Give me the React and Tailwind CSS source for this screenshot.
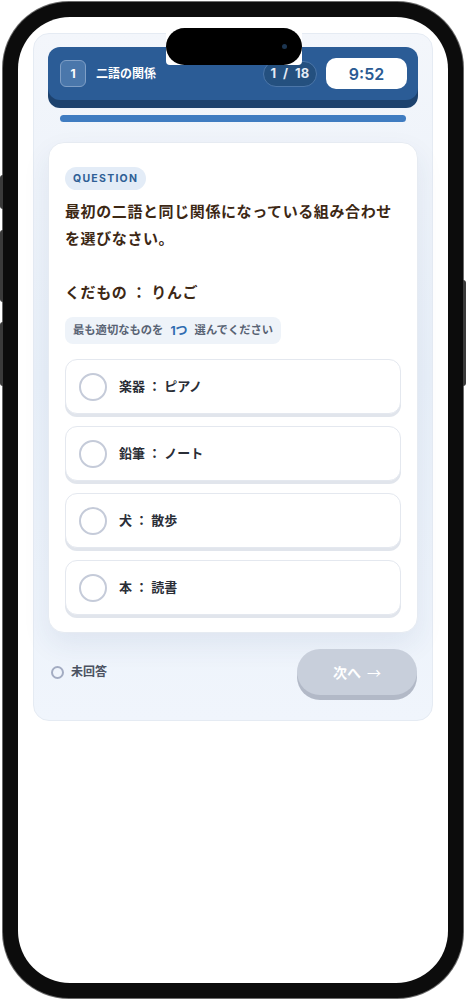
import React from "react";

const options = [
    { id: 1, label: "楽器 ： ピアノ" },
    { id: 2, label: "鉛筆 ： ノート" },
    { id: 3, label: "犬 ： 散歩" },
    { id: 4, label: "本 ： 読書" },
];

const font = { fontFamily: '"Inter", "Noto Sans CJK JP", sans-serif' };

const OptionCard = ({ label }) => (
    <button
        type="button"
        className="flex h-[55px] w-full items-center gap-3 rounded-xl border border-[#e4e8ef] bg-white pl-[13px] text-left shadow-[0_3px_0_#e1e5ec]"
    >
        <span className="h-[28px] w-[28px] shrink-0 rounded-full border-2 border-[#c5cbd9]" />
        <span className="text-[13px] font-bold text-[#2a2e37]">{label}</span>
    </button>
);

const App = () => {
    return (
        <div className="h-[1000px] w-[466px] bg-white pl-[3px] pt-[2px]" style={font}>
            <div className="relative h-[996px] w-[460px] rounded-[66px] bg-[#0c0c0c] p-[15px] ring-1 ring-[#6b6b6b]">
                {/* side buttons */}
                <div className="absolute -left-[3px] top-[173px] h-[34px] w-[3px] rounded-l bg-[#3a3a3a]" />
                <div className="absolute -left-[3px] top-[228px] h-[72px] w-[3px] rounded-l bg-[#3a3a3a]" />
                <div className="absolute -left-[3px] top-[320px] h-[64px] w-[3px] rounded-l bg-[#3a3a3a]" />
                <div className="absolute -right-[3px] top-[278px] h-[106px] w-[3px] rounded-r bg-[#3a3a3a]" />

                <div className="relative h-full overflow-hidden rounded-[52px] bg-white px-[15px] pt-[16px]">
                    {/* dynamic island */}
                    <div className="absolute left-[148px] top-[11px] z-10 flex h-[37px] w-[136px] items-center justify-end rounded-b-sm bg-white">
                        <div className="flex h-full w-full items-center justify-end rounded-full bg-black pr-[15px]">
                            <span className="h-[5px] w-[5px] rounded-full bg-[#1c3550]" />
                        </div>
                    </div>

                    <div className="rounded-2xl border border-[#e5ebf3] bg-gradient-to-b from-[#f3f6fb] via-[#e9f0f9] to-[#f0f5fc] px-[14px] pb-[25px] pt-[13px]">
                        {/* header */}
                        <div className="flex h-[53px] items-center rounded-xl bg-[#2b5c96] pl-[12px] pr-[11px] shadow-[0_8px_0_#1d426e]">
                            <div className="flex h-[27px] w-[26px] items-center justify-center rounded-md border border-[#7f9fc6] bg-[#4a77ab] text-[12px] font-bold text-white">
                                1
                            </div>
                            <span className="ml-[10px] text-[12px] font-bold text-white">二語の関係</span>
                            <div className="ml-auto flex h-[26px] w-[54px] items-center justify-center whitespace-pre rounded-full border border-[#4c76a8] bg-[#24507f] text-[13px] font-bold tracking-[0.02em] text-[#e3eaf4]">
                                {"1  /  18"}
                            </div>
                            <div className="ml-[9px] flex h-[31px] w-[81px] items-center justify-center rounded-[10px] bg-white text-[16px] font-semibold text-[#2b5b93]">
                                9:52
                            </div>
                        </div>

                        {/* progress */}
                        <div className="mx-[12px] mt-[15px] h-[7px] rounded-full bg-[#3f7cc1]" />

                        {/* question card */}
                        <div className="mt-[20px] rounded-2xl border border-[#e6ebf2] bg-white px-[16px] pb-[17px] pt-[24px] shadow-[0_12px_28px_rgba(40,70,120,0.08)]">
                            <div className="flex h-[23px] w-fit items-center rounded-full bg-[#e3ecf7] px-[8px] text-[10.5px] font-bold tracking-[0.12em] text-[#2f5f96]">
                                QUESTION
                            </div>
                            <p className="mt-[8px] whitespace-pre-line text-[15px] font-bold leading-[27px] tracking-[0.04em] text-[#3d2815]">
                                {"最初の二語と同じ関係になっている組み合わせを選びなさい。\n\nくだもの ： りんご"}
                            </p>
                            <div className="mt-[11px] flex h-[27px] w-fit items-center rounded-lg bg-[#eef3f9] px-[8px] text-[11.3px] font-bold text-[#596374]">
                                最も適切なものを<span className="mx-[7px] text-[12px] text-[#2f6bb0]">1つ</span>選んでください
                            </div>
                            <div className="mt-[15px] flex flex-col gap-[12px]">
                                {options.map((o) => (
                                    <OptionCard key={o.id} label={o.label} />
                                ))}
                            </div>
                        </div>

                        {/* footer */}
                        <div className="mt-[16px] flex items-center">
                            <span className="ml-[3px] h-[13px] w-[13px] rounded-full border-2 border-[#a3acc2]" />
                            <span className="ml-[7px] text-[12px] font-bold text-[#4b5261]">未回答</span>
                            <button
                                type="button"
                                className="ml-auto mr-[1px] flex h-[46px] w-[120px] items-center justify-center gap-[6px] rounded-full bg-[#c8cfdb] text-[14px] font-bold text-white shadow-[0_5px_0_#b2b9c7]"
                            >
                                次へ
                                <span style={{ fontFamily: '"Noto Sans CJK JP", sans-serif' }} className="font-normal">→</span>
                            </button>
                        </div>
                    </div>
                </div>
            </div>
        </div>
    );
};

export default App;
